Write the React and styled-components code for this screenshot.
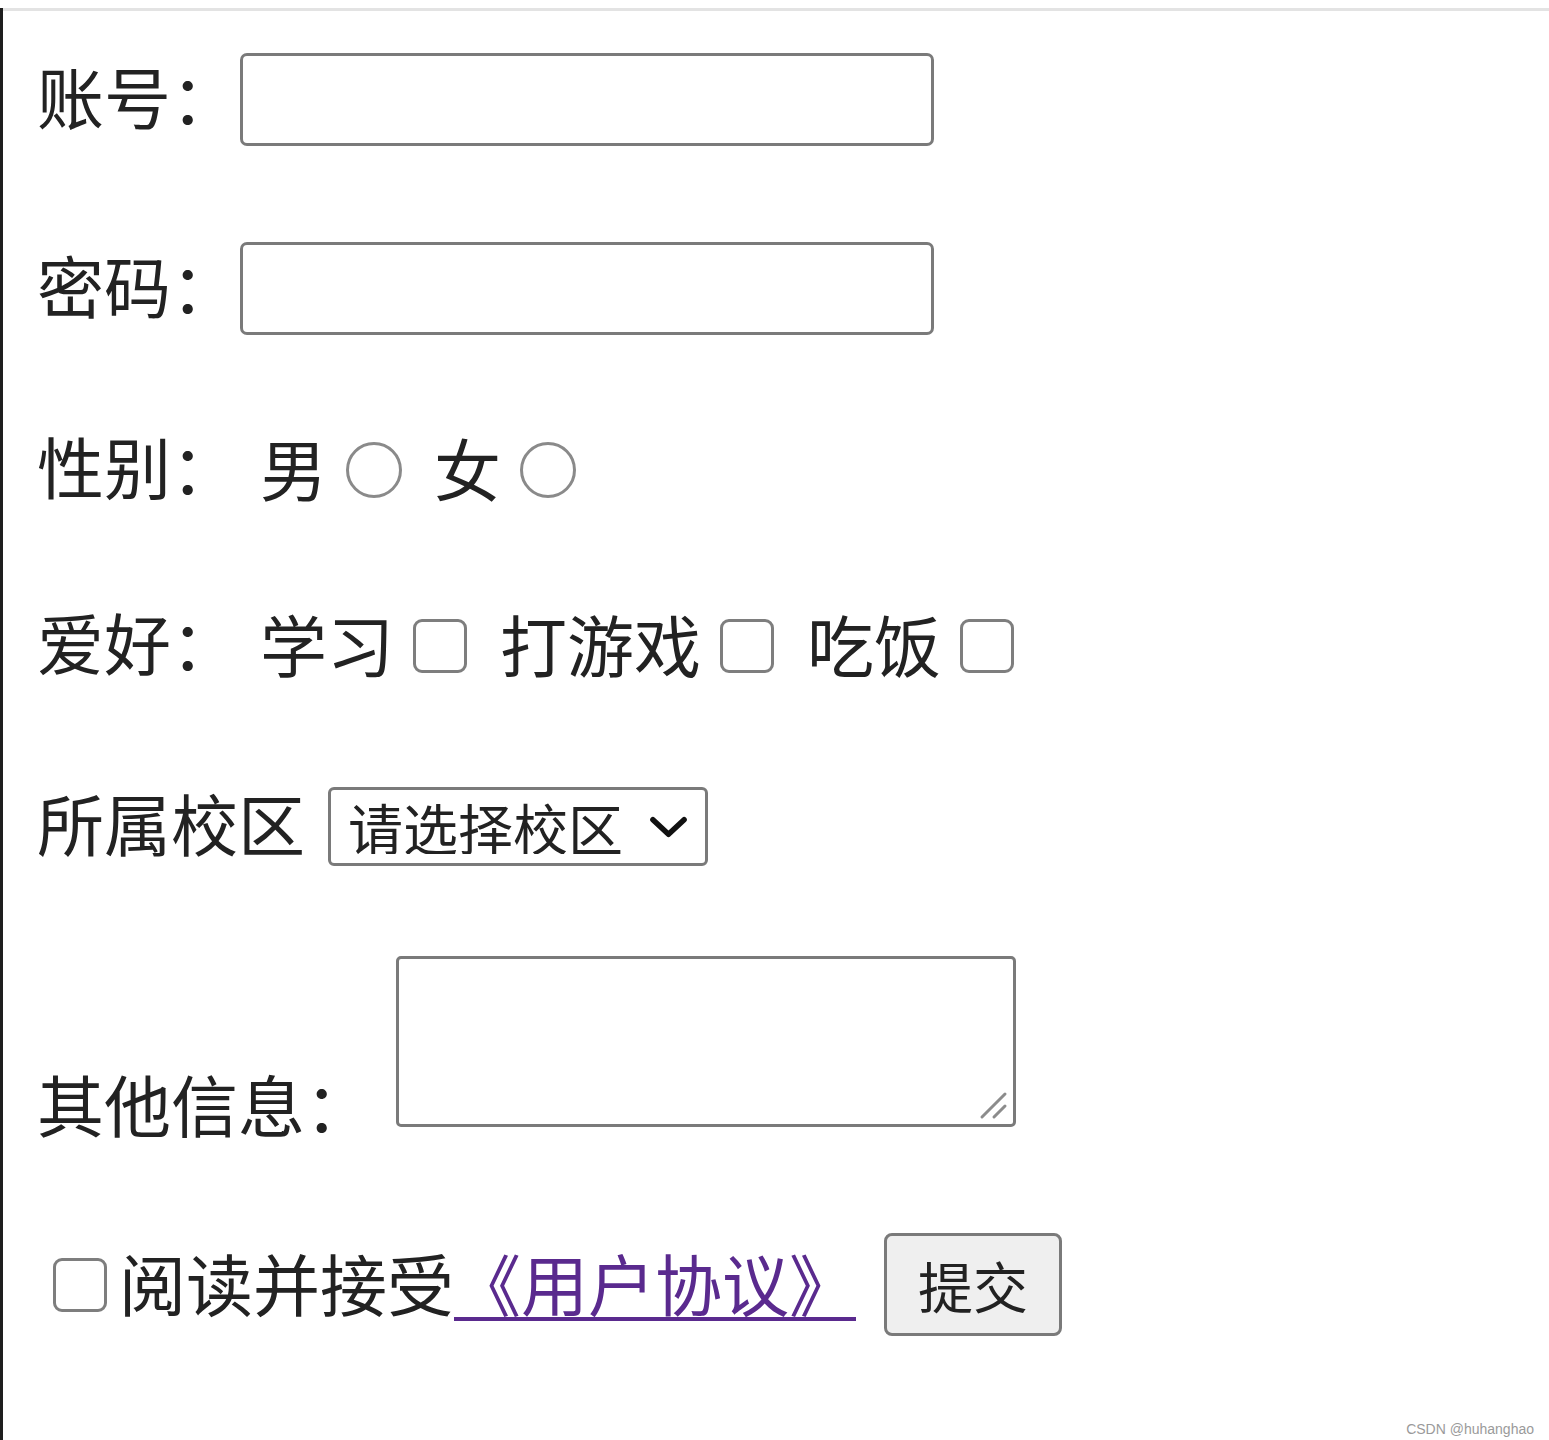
import React from "react";
import styled, { createGlobalStyle } from "styled-components";

const GlobalStyle = createGlobalStyle`
	html, body {
		margin: 0;
		padding: 0;
		background: #fff;
	}
	body {
		font-family: "Noto Sans CJK SC", "Liberation Sans", sans-serif;
		color: #222;
	}
`;

const ink = "#222";
const control_border = "#7a7a7a";

export default function App() {
	return (
		<>
			<GlobalStyle />
			<Page>
				<TopRule />
				<Form onSubmit={(e) => e.preventDefault()}>

					<Row $mt={42} $h={93}>
						<FieldLabel $w={203}>账号：</FieldLabel>
						<TextInput type="text" />
					</Row>

					<Row $mt={96} $h={93}>
						<FieldLabel $w={203}>密码：</FieldLabel>
						<TextInput type="password" />
					</Row>

					<Row $mt={88} $h={93}>
						<FieldLabel $w={223}>性别：</FieldLabel>
						<Option>男<Radio type="radio" name="sex" /></Option>
						<Option $ml={32}>女<Radio type="radio" name="sex" /></Option>
					</Row>

					<Row $mt={83} $h={93}>
						<FieldLabel $w={223}>爱好：</FieldLabel>
						<Option>学习<Check type="checkbox" /></Option>
						<Option $ml={33}>打游戏<Check type="checkbox" /></Option>
						<Option $ml={33}>吃饭<Check type="checkbox" /></Option>
					</Row>

					<Row $mt={88} $h={93}>
						<FieldLabel $w={291}>所属校区</FieldLabel>
						<SelectWrap>
							<Select defaultValue="">
								<option value="">请选择校区</option>
								<option value="a">北京校区</option>
								<option value="b">上海校区</option>
							</Select>
							<Chevron viewBox="0 0 40 24">
								<path d="M3 4 L20 20 L37 4" />
							</Chevron>
						</SelectWrap>
					</Row>

					<Row $mt={83} $h={184} $align="stretch">
						<FieldLabel $w={359} $bottom>其他信息：</FieldLabel>
						<AreaWrap>
							<TextArea />
							<Grip viewBox="0 0 30 30">
								<path d="M4 27 L27 4 M16 27 L27 16" />
							</Grip>
						</AreaWrap>
					</Row>

					<Row $mt={93} $h={103}>
						<AgreeCheck type="checkbox" />
						<AgreeText>
							阅读并接受<AgreementLink href="#">《用户协议》</AgreementLink>
						</AgreeText>
						<SubmitButton type="submit">提交</SubmitButton>
					</Row>

				</Form>
				<Watermark>CSDN @huhanghao</Watermark>
			</Page>
		</>
	);
}

const Page = styled.div`
	position: relative;
	min-height: 1440px;
	box-sizing: border-box;
	border-left: 3px solid #1e1e1e;
`;

const TopRule = styled.div`
	height: 3px;
	margin-top: 8px;
	background: #e3e3e3;
`;

const Form = styled.form`
	display: flex;
	flex-direction: column;
	padding-left: 34px;
	font-size: 67px;
	line-height: 1;
	color: ${ink};
`;

const Row = styled.div`
	display: flex;
	align-items: ${(p) => p.$align || "center"};
	height: ${(p) => p.$h}px;
	margin-top: ${(p) => p.$mt}px;
`;

const FieldLabel = styled.label`
	flex: none;
	width: ${(p) => p.$w}px;
	white-space: nowrap;
	padding-bottom: 10px;
	align-self: ${(p) => (p.$bottom ? "flex-end" : "auto")};
	margin-bottom: ${(p) => (p.$bottom ? "-6px" : "0")};
`;

const TextInput = styled.input`
	box-sizing: border-box;
	width: 694px;
	height: 93px;
	border: 3px solid ${control_border};
	border-radius: 7px;
	background: #fff;
	outline: none;
	font-size: 55px;
	padding: 0 12px;
`;

const Option = styled.span`
	display: inline-flex;
	align-items: center;
	gap: 19px;
	margin-left: ${(p) => p.$ml || 0}px;
	white-space: nowrap;
	& > input {
		margin-top: 6px;
	}
	padding-bottom: 6px;
`;

const Radio = styled.input`
	appearance: none;
	margin: 0;
	box-sizing: border-box;
	width: 56px;
	height: 56px;
	border: 3px solid #8a8a8a;
	border-radius: 50%;
	background: #fff;
`;

const Check = styled.input`
	appearance: none;
	margin: 0;
	box-sizing: border-box;
	width: 54px;
	height: 54px;
	border: 3px solid #7e7e7e;
	border-radius: 9px;
	background: #fff;
`;

const SelectWrap = styled.div`
	position: relative;
	width: 380px;
	height: 79px;
`;

const Select = styled.select`
	appearance: none;
	box-sizing: border-box;
	width: 100%;
	height: 100%;
	margin: 0;
	border: 3px solid ${control_border};
	border-radius: 6px;
	background: #fff;
	color: ${ink};
	font-family: "Noto Sans CJK SC", sans-serif;
	font-size: 55px;
	line-height: 1;
	padding: 0 70px 0 17px;
	outline: none;
`;

const Chevron = styled.svg`
	position: absolute;
	right: 21px;
	top: 29px;
	width: 37px;
	height: 22px;
	fill: none;
	stroke: #111;
	stroke-width: 6;
	stroke-linecap: round;
	stroke-linejoin: round;
	pointer-events: none;
`;

const AreaWrap = styled.div`
	position: relative;
	width: 620px;
	height: 171px;
	align-self: flex-start;
`;

const TextArea = styled.textarea`
	box-sizing: border-box;
	width: 100%;
	height: 100%;
	margin: 0;
	border: 3px solid ${control_border};
	border-radius: 5px;
	resize: none;
	outline: none;
	display: block;
`;

const Grip = styled.svg`
	position: absolute;
	right: 8px;
	bottom: 7px;
	width: 30px;
	height: 30px;
	fill: none;
	stroke: #8c8c8c;
	stroke-width: 3;
	stroke-linecap: round;
	pointer-events: none;
`;

const AgreeCheck = styled(Check)`
	margin-left: 16px;
`;

const AgreeText = styled.span`
	margin-left: 12px;
	padding-bottom: 6px;
	white-space: nowrap;
`;

const AgreementLink = styled.a`
	color: #5a2a8e;
	text-decoration: underline;
	text-decoration-thickness: 4px;
	text-underline-offset: 6px;
	padding-right: 6px;
`;

const SubmitButton = styled.button`
	box-sizing: border-box;
	margin-left: 22px;
	width: 178px;
	height: 103px;
	border: 3px solid ${control_border};
	border-radius: 8px;
	background: #efefef;
	color: ${ink};
	font-family: "Noto Sans CJK SC", sans-serif;
	font-size: 55px;
	line-height: 1;
	padding: 0;
`;

const Watermark = styled.div`
	position: absolute;
	right: 15px;
	bottom: 11px;
	font-family: "Liberation Sans", Arial, sans-serif;
	font-size: 14px;
	color: #9a9a9a;
`;
